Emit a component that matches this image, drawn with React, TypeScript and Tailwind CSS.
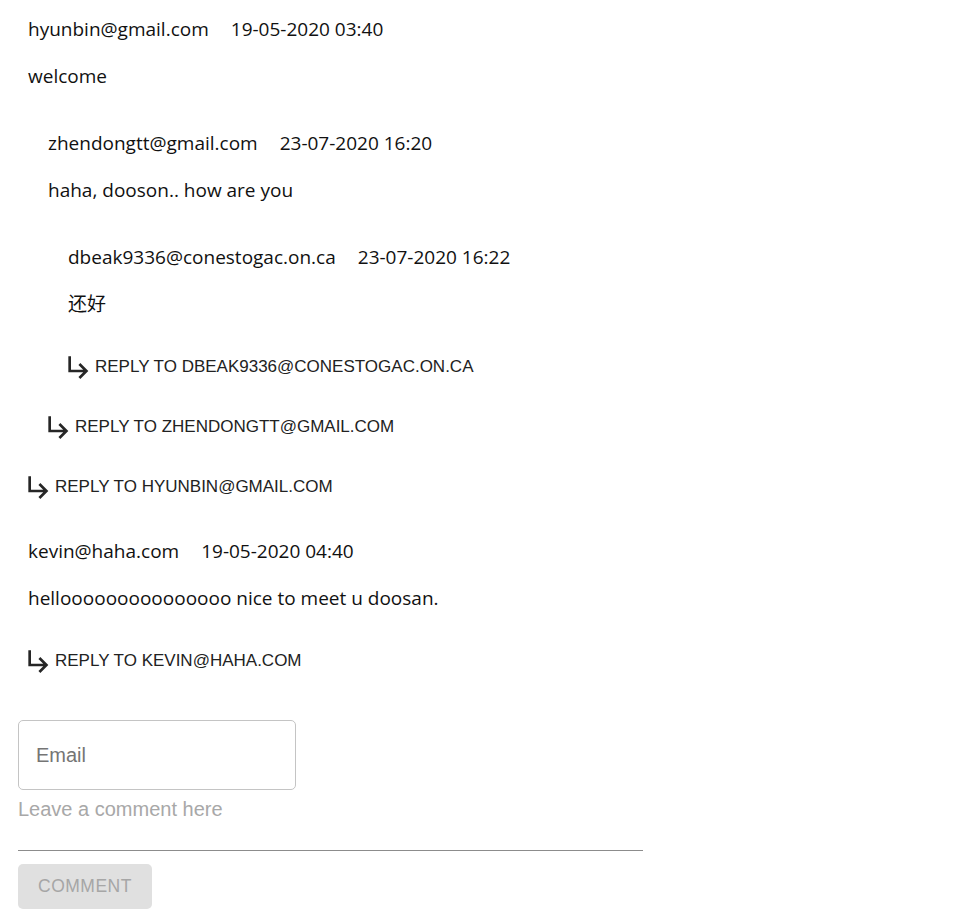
import React from 'react';

type CommentData = {
  email: string;
  date: string;
  text: string;
  replies?: CommentData[];
};

const comments: CommentData[] = [
  {
    email: 'hyunbin@gmail.com',
    date: '19-05-2020 03:40',
    text: 'welcome',
    replies: [
      {
        email: 'zhendongtt@gmail.com',
        date: '23-07-2020 16:20',
        text: 'haha, dooson.. how are you',
        replies: [
          {
            email: 'dbeak9336@conestogac.on.ca',
            date: '23-07-2020 16:22',
            text: '还好',
          },
        ],
      },
    ],
  },
  {
    email: 'kevin@haha.com',
    date: '19-05-2020 04:40',
    text: 'hellooooooooooooooo nice to meet u doosan.',
  },
];

const ReplyArrow = () => (
  <svg width="32" height="32" viewBox="0 0 24 24" className="shrink-0 -ml-[5px]" fill="#262626">
    <path d="M19 15l-6 6-1.42-1.42L15.17 16H4V4h2v10h9.17l-3.59-3.58L13 9l6 6z" />
  </svg>
);

const Comment: React.FC<{ c: CommentData; nested?: boolean }> = ({ c, nested }) => (
  <div className={`flex flex-col pt-[14px] ${nested ? 'pl-[20px]' : ''}`}>
    <div className="h-[30px] flex items-center leading-[30px]">
      <span>{c.email}</span>
      <span className="ml-[22px]">{c.date}</span>
    </div>
    <div className="h-[30px] mt-[17px] mb-[10px] leading-[30px]">{c.text}</div>
    {c.replies && (
      <div className="mt-[13px]">
        {c.replies.map((r) => (
          <Comment key={r.email} c={r} nested />
        ))}
      </div>
    )}
    <button className="mt-[15px] h-[45px] flex items-center self-start text-[17px] text-[#222] font-['Liberation_Sans',Arial,sans-serif] uppercase">
      <ReplyArrow />
      <span>Reply to {c.email}</span>
    </button>
  </div>
);

export default function App() {
  return (
    <div className="min-h-[924px] bg-white px-[18px] pb-[16px] font-['Open_Sans','Noto_Sans_CJK_SC',sans-serif] text-[19px] text-[#111]">
      <div className="pl-[10px] flex flex-col gap-[13px]">
        {comments.map((c) => (
          <Comment key={c.email} c={c} />
        ))}
      </div>
      <form className="mt-[37px] flex flex-col font-['Liberation_Sans',Arial,sans-serif]">
        <div className="w-[278px] h-[70px] border border-[#c4c4c4] rounded-[5px] flex items-center px-[17px] text-[20px] text-[#757575]">
          Email
        </div>
        <div className="w-[625px] h-[61px] border-b border-[#8c8c8c] text-[20px] text-[#a8a8a8] leading-[38px]">
          Leave a comment here
        </div>
        <button
          type="button"
          className="mt-[13px] w-[134px] h-[45px] rounded-[5px] bg-[#e0e0e0] text-[#a6a6a6] text-[17.5px] tracking-[0.5px] uppercase flex items-center justify-center"
        >
          Comment
        </button>
      </form>
    </div>
  );
}
